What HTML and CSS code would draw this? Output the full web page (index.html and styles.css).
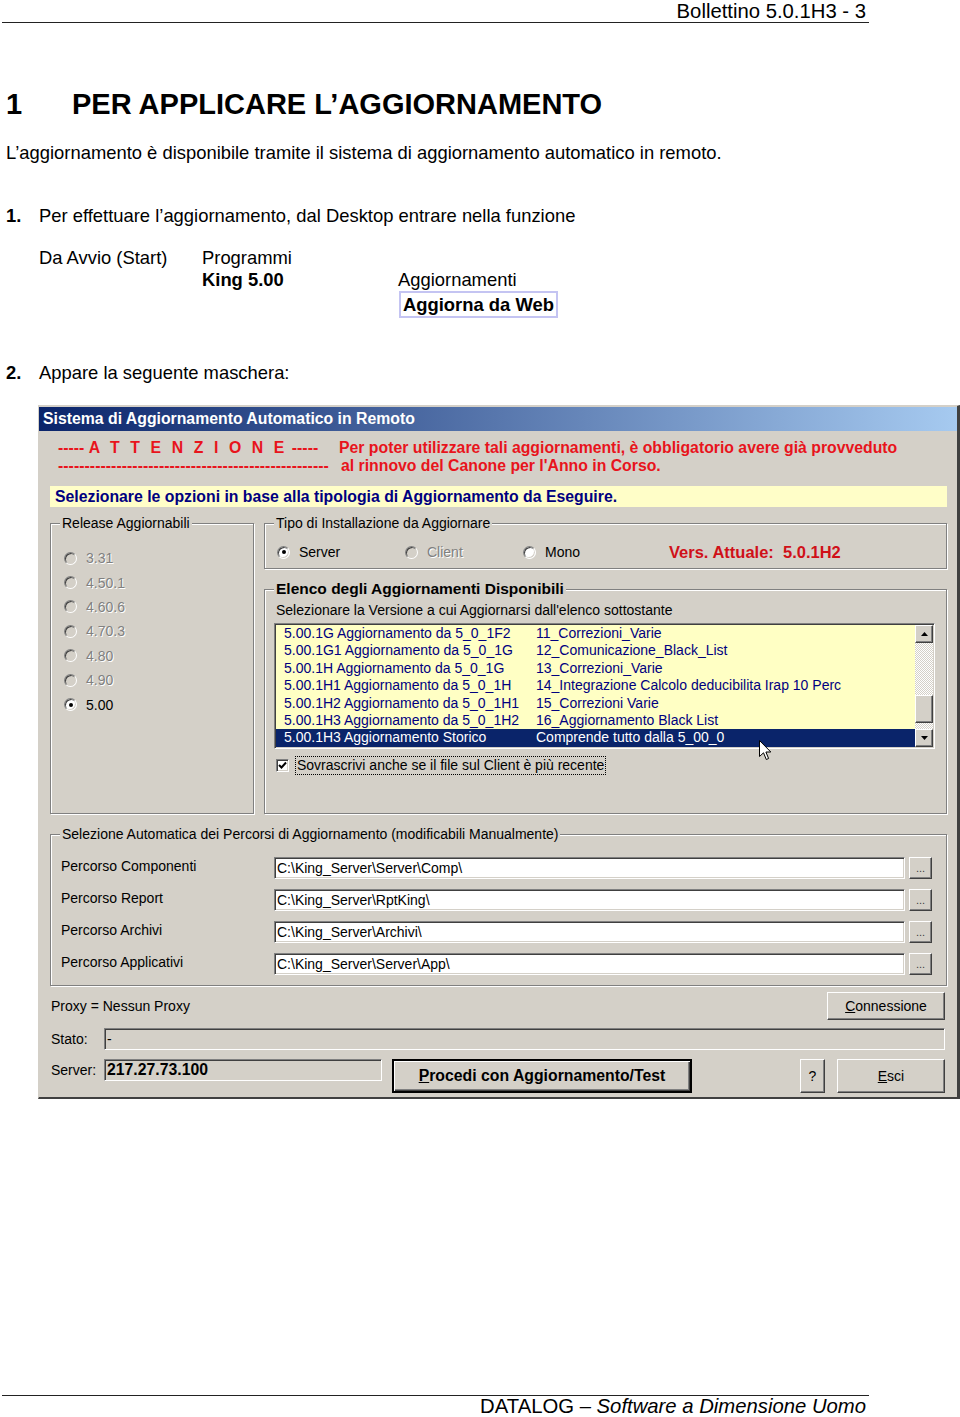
FILE: index.html
```html
<!DOCTYPE html>
<html lang="it">
<head>
  <meta charset="UTF-8">
  <meta name="viewport" content="width=device-width, initial-scale=1.0">
  <title>Bollettino 5.0.1H3 - 3</title>
  <link rel="stylesheet" href="styles.css">
</head>
<body>
  <div class="sheet">
    <div class="run-head">Bollettino 5.0.1H3 - 3</div>

    <h1 class="chapter"><span class="num">1</span>PER APPLICARE L’AGGIORNAMENTO</h1>
    <p class="intro">L’aggiornamento è disponibile tramite il sistema di aggiornamento automatico in remoto.</p>

    <div class="step first"><span class="n">1.</span><span>Per effettuare l’aggiornamento, dal Desktop entrare nella funzione</span></div>

    <!-- percorso menu -->
    <div class="menu-path">
      <span>Da Avvio (Start)</span><span>Programmi</span><span></span>
      <span></span><b>King 5.00</b><span>Aggiornamenti</span>
      <span></span><span></span><b class="menu-box">Aggiorna da Web</b>
    </div>

    <div class="step second"><span class="n">2.</span><span>Appare la seguente maschera:</span></div>

    <!-- finestra -->
    <div class="dialog">
      <div class="titlebar">Sistema di Aggiornamento Automatico in Remoto</div>

      <div class="warning">
        <div><span>-----</span> <span class="spaced">A T T E N Z I O N E</span> <span>-----</span></div>
        <div>Per poter utilizzare tali aggiornamenti, è obbligatorio avere già provveduto</div>
        <div class="dash-line">---------------------------------------------------</div>
        <div class="indent">al rinnovo del Canone per l'Anno in Corso.</div>
      </div>

      <div class="hint">Selezionare le opzioni in base alla tipologia di Aggiornamento da Eseguire.</div>

      <div class="panes">
        <div class="group releases">
          <span class="group-title">Release Aggiornabili</span>
          <div class="opt"><span class="radio off"></span><span class="dim">3.31</span></div>
          <div class="opt"><span class="radio off"></span><span class="dim">4.50.1</span></div>
          <div class="opt"><span class="radio off"></span><span class="dim">4.60.6</span></div>
          <div class="opt"><span class="radio off"></span><span class="dim">4.70.3</span></div>
          <div class="opt"><span class="radio off"></span><span class="dim">4.80</span></div>
          <div class="opt"><span class="radio off"></span><span class="dim">4.90</span></div>
          <div class="opt"><span class="radio checked"></span><span>5.00</span></div>
        </div>

        <div class="right-col">
          <div class="group install">
            <span class="group-title">Tipo di Installazione da Aggiornare</span>
            <div class="opt w-server"><span class="radio checked"></span><span>Server</span></div>
            <div class="opt w-client"><span class="radio off"></span><span class="dim">Client</span></div>
            <div class="opt w-mono"><span class="radio"></span><span>Mono</span></div>
            <span class="version">Vers. Attuale:  5.0.1H2</span>
          </div>

          <div class="group updates">
            <span class="group-title bold">Elenco degli Aggiornamenti Disponibili</span>
            <div class="subtitle">Selezionare la Versione a cui Aggiornarsi dall'elenco sottostante</div>
            <div class="listbox">
              <div class="rows">
                <div class="row"><span class="c1">5.00.1G Aggiornamento da 5_0_1F2</span><span>11_Correzioni_Varie</span></div>
                <div class="row"><span class="c1">5.00.1G1 Aggiornamento da 5_0_1G</span><span>12_Comunicazione_Black_List</span></div>
                <div class="row"><span class="c1">5.00.1H Aggiornamento da 5_0_1G</span><span>13_Correzioni_Varie</span></div>
                <div class="row"><span class="c1">5.00.1H1 Aggiornamento da 5_0_1H</span><span>14_Integrazione Calcolo deducibilita Irap 10 Perc</span></div>
                <div class="row"><span class="c1">5.00.1H2 Aggiornamento da 5_0_1H1</span><span>15_Correzioni Varie</span></div>
                <div class="row"><span class="c1">5.00.1H3 Aggiornamento da 5_0_1H2</span><span>16_Aggiornamento Black List</span></div>
                <div class="row selected"><span class="c1">5.00.1H3 Aggiornamento Storico</span><span>Comprende tutto dalla 5_00_0</span></div>
              </div>
              <div class="scrollbar">
                <div class="sb-btn"><svg width="7" height="4" viewBox="0 0 7 4"><path d="M3.5 0L7 4H0z" fill="#000"/></svg></div>
                <div class="sb-track"><div class="sb-thumb"></div></div>
                <div class="sb-btn"><svg width="7" height="4" viewBox="0 0 7 4"><path d="M0 0H7L3.5 4z" fill="#000"/></svg></div>
              </div>
              <svg class="cursor" width="13" height="21" viewBox="0 0 13 21">
                <path d="M0.5 0.5V16.5L4.5 12.8L7.3 19.5L9.6 18.5L6.9 12H11.8Z" fill="#fff" stroke="#000" stroke-width="1"/>
              </svg>
            </div>
            <div class="check-row">
              <span class="checkbox"><svg width="9" height="9" viewBox="0 0 9 9"><path d="M1 4L3.5 6.5L8 1.5" fill="none" stroke="#000" stroke-width="2"/></svg></span>
              <span class="focus">Sovrascrivi anche se il file sul Client è più recente</span>
            </div>
          </div>
        </div>
      </div>

      <div class="group paths">
        <span class="group-title">Selezione Automatica dei Percorsi di Aggiornamento (modificabili Manualmente)</span>
        <div class="path-row"><span class="lbl">Percorso Componenti</span><span class="field">C:\King_Server\Server\Comp\</span><span class="btn dots">...</span></div>
        <div class="path-row"><span class="lbl">Percorso Report</span><span class="field">C:\King_Server\RptKing\</span><span class="btn dots">...</span></div>
        <div class="path-row"><span class="lbl">Percorso Archivi</span><span class="field">C:\King_Server\Archivi\</span><span class="btn dots">...</span></div>
        <div class="path-row"><span class="lbl">Percorso Applicativi</span><span class="field">C:\King_Server\Server\App\</span><span class="btn dots">...</span></div>
      </div>

      <div class="tail proxy">
        <span>Proxy = Nessun Proxy</span>
        <span class="btn connect"><u>C</u>onnessione</span>
      </div>
      <div class="tail status">
        <span class="lbl">Stato:</span>
        <span class="field grey">-</span>
      </div>
      <div class="tail server">
        <span class="lbl">Server:</span>
        <span class="field grey ip">217.27.73.100</span>
        <span class="btn default"><u>P</u>rocedi con Aggiornamento/Test</span>
        <span class="btn help">?</span>
        <span class="btn quit"><u>E</u>sci</span>
      </div>
    </div>

    <div class="run-foot">DATALOG – <i>Software a Dimensione Uomo</i></div>
  </div>
</body>
</html>
```

FILE: styles.css
```css
body {
  margin: 0;
  font-family: 'Liberation Sans', Arial, sans-serif;
  color: #000;
  background: #fff;
}
.sheet {
  height: 100vh;
  display: flex;
  flex-direction: column;
}
.run-head {
  margin-left: 2px;
  width: 864px;
  padding-right: 3px;
  border-bottom: 1px solid #222;
  text-align: right;
  font-size: 20.3px;
  line-height: 22px;
}
.chapter {
  margin: 64px 0 0 6px;
  font-size: 29px;
  line-height: 34px;
  font-weight: bold;
}
.chapter .num {
  display: inline-block;
  width: 66px;
}
.intro {
  margin: 21px 0 0 6px;
  font-size: 18.4px;
  line-height: 22px;
}
.step {
  display: flex;
  margin-left: 6px;
  font-size: 18.4px;
  line-height: 22px;
}
.step .n {
  width: 33px;
  font-weight: bold;
}
.step.first {
  margin-top: 41px;
}
.step.second {
  margin-top: 44px;
}
.menu-path {
  display: grid;
  grid-template-columns: 163px 196px auto;
  margin: 20px 0 0 39px;
  font-size: 18.4px;
  line-height: 22px;
}
.menu-box {
  justify-self: start;
  margin-left: 1px;
  padding: 0 2px;
  border: 2px solid #c4c4f2;
  line-height: 23px;
}

/* finestra */
.dialog {
  box-sizing: border-box;
  width: 922px;
  margin: 21px 0 0 38px;
  padding: 1px 0 4px;
  background: #d4d0c8;
  border: 1px solid #d4d0c8;
  border-right: 3px solid #404040;
  border-bottom: 2px solid #404040;
  font-size: 14px;
}
.titlebar {
  height: 24px;
  line-height: 24px;
  padding-left: 4px;
  color: #fff;
  font-weight: bold;
  font-size: 15.8px;
  background: linear-gradient(to right, #0a246a, #a6caf0);
}
.warning {
  display: grid;
  grid-template-columns: 281px auto;
  margin-top: 8px;
  padding-left: 19px;
  color: #e8141c;
  font-weight: bold;
  font-size: 15.8px;
  line-height: 18px;
  white-space: nowrap;
}
.warning .spaced {
  letter-spacing: 3.1px;
}
.warning .dash-line {
  letter-spacing: 0.05px;
}
.warning .indent {
  padding-left: 2px;
}
.hint {
  margin: 11px 10px 0 11px;
  height: 21px;
  line-height: 21px;
  padding-left: 5px;
  background: #fffec8;
  color: #000080;
  font-weight: bold;
  font-size: 15.8px;
}
.panes {
  display: flex;
  gap: 10px;
  height: 291px;
  margin: 16px 10px 0 11px;
}
.group {
  position: relative;
  box-sizing: border-box;
  border: 1px solid #808080;
  box-shadow: inset 1px 1px #fff, 1px 1px #fff;
}
.group-title {
  position: absolute;
  top: -9px;
  left: 9px;
  padding: 0 2px;
  line-height: 16px;
  background: #d4d0c8;
}
.group-title.bold {
  top: -10px;
  line-height: 18px;
  font-weight: bold;
  font-size: 15.5px;
}
.releases {
  width: 204px;
  padding: 22px 0 0 13px;
}
.opt {
  display: flex;
  align-items: center;
  gap: 9px;
  height: 24.4px;
}
.radio {
  position: relative;
  box-sizing: border-box;
  width: 13px;
  height: 13px;
  border-radius: 50%;
  border: 1px solid;
  border-color: #808080 #fff #fff #808080;
  box-shadow: inset 1px 1px #404040, inset -1px -1px #d4d0c8;
  background: #fff;
}
.radio.off {
  background: #d4d0c8;
}
.radio.checked::after {
  content: "";
  position: absolute;
  left: 3.5px;
  top: 3.5px;
  width: 4px;
  height: 4px;
  border-radius: 50%;
  background: #000;
}
.dim {
  color: #808080;
  text-shadow: 1px 1px #fff;
}
.right-col {
  display: flex;
  flex-direction: column;
  width: 683px;
}
.install {
  display: flex;
  align-items: center;
  height: 46px;
  padding: 12px 0 0 12px;
}
.install .opt {
  height: 24px;
}
.w-server { width: 128px; }
.w-client { width: 118px; }
.w-mono { width: 146px; }
.version {
  color: #d01018;
  font-weight: bold;
  font-size: 16.5px;
  white-space: pre;
}
.updates {
  margin-top: 20px;
  height: 225px;
  padding: 11px 11px 0 9px;
}
.subtitle {
  padding-left: 2px;
  line-height: 18px;
}
.listbox {
  position: relative;
  display: flex;
  margin-top: 4px;
  padding: 1px;
  border: 1px solid;
  border-color: #808080 #fff #fff #808080;
  box-shadow: inset 1px 1px #404040, inset -1px -1px #d4d0c8;
}
.rows {
  flex: 1;
  background: #ffffc4;
  color: #000080;
}
.row {
  display: flex;
  height: 17.4px;
  line-height: 17.4px;
  padding-left: 8px;
  white-space: nowrap;
}
.row .c1 {
  width: 252px;
}
.row.selected {
  background: #0a246a;
  color: #fff;
}
.scrollbar {
  display: flex;
  flex-direction: column;
  width: 18px;
}
.sb-btn, .sb-thumb, .btn {
  box-sizing: border-box;
  background: #d4d0c8;
  border: 1px solid;
  border-color: #fff #404040 #404040 #fff;
  box-shadow: inset -1px -1px #808080, inset 1px 1px #d4d0c8;
}
.sb-btn {
  display: flex;
  align-items: center;
  justify-content: center;
  height: 18px;
}
.sb-track {
  flex: 1;
  background: repeating-conic-gradient(#fff 0 25%, #d4d0c8 0 50%) 0 0 / 2px 2px;
}
.sb-thumb {
  height: 28px;
  margin-top: 52px;
}
.cursor {
  position: absolute;
  left: 484px;
  top: 116px;
}
.check-row {
  display: flex;
  align-items: center;
  gap: 6px;
  height: 20px;
  margin-top: 7px;
  padding-left: 2px;
}
.checkbox {
  box-sizing: border-box;
  display: flex;
  align-items: center;
  justify-content: center;
  width: 13px;
  height: 13px;
  background: #fff;
  border: 1px solid;
  border-color: #808080 #fff #fff #808080;
  box-shadow: inset 1px 1px #404040, inset -1px -1px #d4d0c8;
}
.focus {
  padding: 0 1px;
  line-height: 17px;
  border: 1px dotted #000;
}
.paths {
  height: 152px;
  margin: 20px 10px 0 11px;
  padding: 22px 0 0 10px;
}
.path-row {
  display: flex;
  align-items: flex-start;
  height: 22px;
  margin-bottom: 10px;
}
.path-row .lbl {
  width: 213px;
  line-height: 18px;
}
.field {
  box-sizing: border-box;
  height: 22px;
  padding-left: 2px;
  line-height: 20px;
  background: #fff;
  border: 1px solid;
  border-color: #808080 #fff #fff #808080;
  box-shadow: inset 1px 1px #404040, inset -1px -1px #d4d0c8;
  white-space: nowrap;
}
.path-row .field {
  width: 631px;
}
.btn {
  display: flex;
  align-items: center;
  justify-content: center;
}
.btn.dots {
  width: 23px;
  height: 22px;
  margin-left: 4px;
  font-size: 11px;
  color: #404040;
}
.tail {
  display: flex;
  margin: 0 12px;
}
.tail .lbl {
  width: 53px;
  line-height: 22px;
}
.proxy {
  align-items: center;
  justify-content: space-between;
  height: 28px;
  margin-top: 6px;
}
.connect {
  width: 118px;
  height: 28px;
}
.status {
  margin-top: 8px;
}
.field.grey {
  background: #d4d0c8;
}
.status .field {
  flex: 1;
}
.server {
  align-items: flex-start;
  height: 34px;
  margin-top: 9px;
}
.ip {
  width: 278px;
  font-weight: bold;
  font-size: 15.8px;
}
.default {
  width: 300px;
  height: 34px;
  margin-left: 10px;
  font-weight: bold;
  font-size: 15.8px;
  border-width: 2px;
  border-color: #000;
  box-shadow: inset 1px 1px #fff, inset -1px -1px #404040, inset -2px -2px #808080;
}
.help {
  width: 25px;
  height: 34px;
  margin-left: auto;
}
.quit {
  width: 108px;
  height: 34px;
  margin-left: 12px;
}
.run-foot {
  margin: auto 0 0 2px;
  width: 864px;
  padding-right: 3px;
  border-top: 1px solid #222;
  text-align: right;
  font-size: 20.3px;
  line-height: 21px;
}
```
